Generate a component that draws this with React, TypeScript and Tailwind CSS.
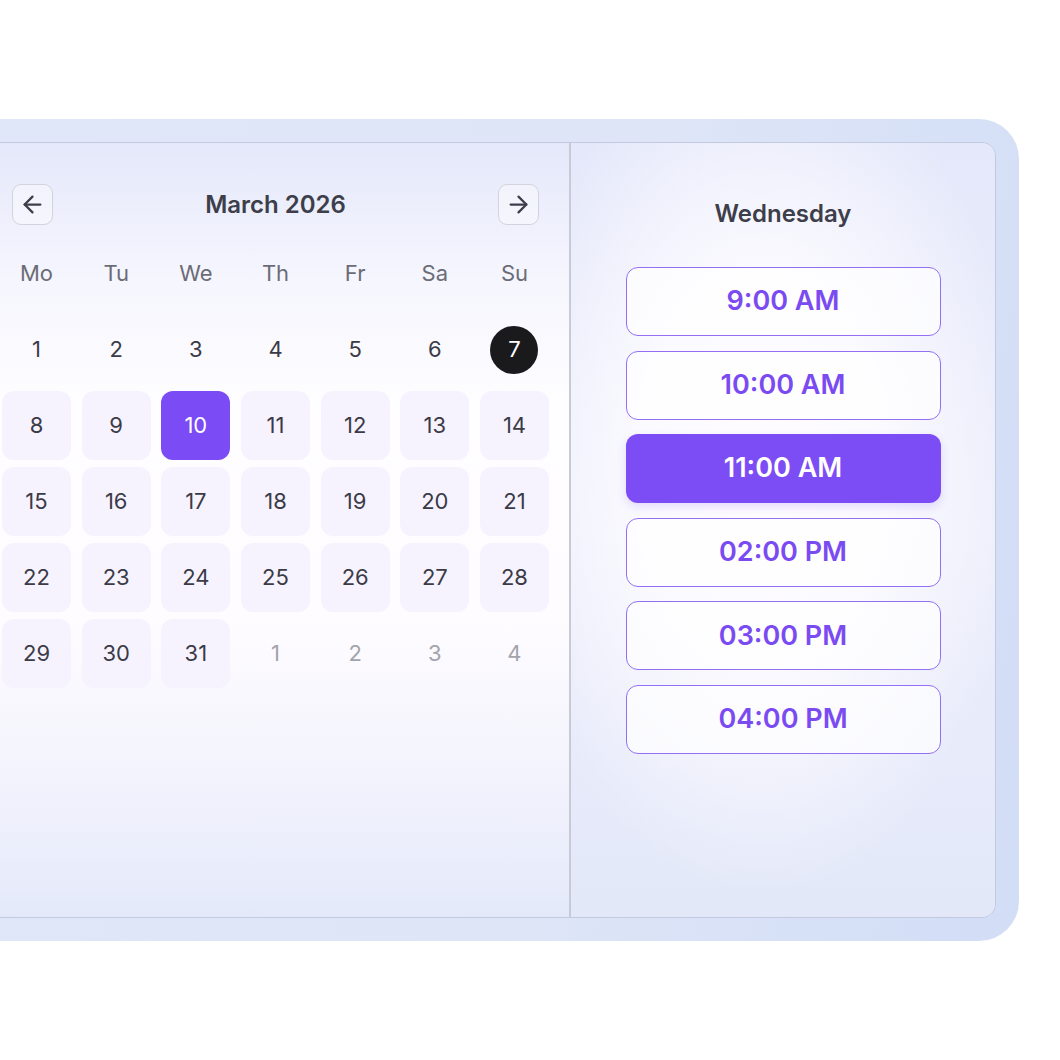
import { ArrowLeft, ArrowRight } from "lucide-react"

type Day = {
  n: number
  muted?: boolean
  filled?: boolean
  selected?: boolean
  today?: boolean
}

const WEEKDAYS = ["Mo", "Tu", "We", "Th", "Fr", "Sa", "Su"]

const DAYS: Day[] = [
  { n: 1 }, { n: 2 }, { n: 3 }, { n: 4 }, { n: 5 }, { n: 6 }, { n: 7, today: true },
  ...[8, 9, 10, 11, 12, 13, 14, 15, 16, 17, 18, 19, 20, 21, 22, 23, 24, 25, 26, 27, 28, 29, 30, 31].map(n => ({
    n,
    filled: true,
    selected: n === 10,
  })),
  { n: 1, muted: true }, { n: 2, muted: true }, { n: 3, muted: true }, { n: 4, muted: true },
]

const SLOTS = ["9:00 AM", "10:00 AM", "11:00 AM", "02:00 PM", "03:00 PM", "04:00 PM"]
const ACTIVE_SLOT = "11:00 AM"

const NavButton = ({ dir }: { dir: "prev" | "next" }) => (
  <button className="flex h-[41px] w-[41px] items-center justify-center rounded-[9px] border-[1.5px] border-[#d2d3db] bg-white/40 text-[#3d3e4a]">
    {dir === "prev" ? <ArrowLeft size={27} strokeWidth={2} /> : <ArrowRight size={27} strokeWidth={2} />}
  </button>
)

const DayCell = ({ day }: { day: Day }) => {
  if (day.today) {
    return (
      <div className="flex h-[69px] items-center justify-center">
        <span className="flex h-[48px] w-[48px] items-center justify-center rounded-full bg-[#1a1a1d] text-white">{day.n}</span>
      </div>
    )
  }
  if (day.selected) {
    return <div className="flex h-[69px] items-center justify-center rounded-[12px] bg-[#7b4bf5] text-white">{day.n}</div>
  }
  if (day.filled) {
    return <div className="flex h-[69px] items-center justify-center rounded-[12px] bg-[#f6f3ff] text-[#3b3b47]">{day.n}</div>
  }
  return (
    <div className={`flex h-[69px] items-center justify-center ${day.muted ? "text-[#a3a3ab]" : "text-[#3b3b47]"}`}>
      {day.n}
    </div>
  )
}

const Calendar = () => (
  <div className="flex h-full w-[588px] shrink-0 flex-col border-r-2 border-[#c8cad6] bg-[linear-gradient(180deg,#e4e8fa_0%,#f6f6fe_18%,#fefdff_34%,#fefcff_62%,#f4f4fd_80%,#e4e9fa_100%)] pl-[19px] pr-[20px] pt-[41px]">
    <div className="flex h-[41px] items-center justify-between px-[10px]">
      <NavButton dir="prev" />
      <h2 className="text-[24px] font-semibold text-[#3d3e4a]">March 2026</h2>
      <NavButton dir="next" />
    </div>

    <div className="mt-[14px] grid grid-cols-7 gap-x-[10.6px] gap-y-[7px] text-[22px]">
      {WEEKDAYS.map(w => (
        <div key={w} className="flex h-[69px] items-center justify-center text-[#6b6c76]">{w}</div>
      ))}
      {DAYS.map((d, i) => <DayCell key={i} day={d} />)}
    </div>
  </div>
)

const TimeSlots = () => (
  <div className="flex h-full flex-1 flex-col items-center bg-[radial-gradient(ellipse_62%_55%_at_45%_42%,#fefcff_0%,#fbfaff_45%,rgba(251,250,255,0)_100%),linear-gradient(180deg,#e4e8fa_0%,#eceefb_50%,#e3e8f9_100%)] pt-[57px]">
    <h3 className="text-[24px] font-semibold leading-[28px] text-[#3d3e4a]">Wednesday</h3>
    <div className="mt-[39px] flex flex-col gap-[14.6px]">
      {SLOTS.map(s =>
        s === ACTIVE_SLOT ? (
          <button key={s} className="flex h-[69px] w-[315px] items-center justify-center rounded-[12px] bg-[#7c4cf5] text-[27px] font-semibold text-white shadow-[0_4px_10px_rgba(124,76,245,0.18)]">
            {s}
          </button>
        ) : (
          <button key={s} className="flex h-[69px] w-[315px] items-center justify-center rounded-[12px] border-[1.5px] border-[#936ff6] bg-white/70 text-[27px] font-semibold text-[#7b4bf2]">
            {s}
          </button>
        )
      )}
    </div>
  </div>
)

export default function App() {
  return (
    <div className="h-[1060px] w-[1060px] overflow-hidden bg-white pt-[119px] font-['Inter',sans-serif]">
      <div className="ml-[-41px] h-[822px] w-[1060px] rounded-[40px] bg-[linear-gradient(100deg,#dfe7f8_0%,#dde5f7_60%,#d2ddf6_100%)] p-[23px]">
        <div className="flex h-full overflow-hidden rounded-[14px] border border-[#c3c9df]">
          <Calendar />
          <TimeSlots />
        </div>
      </div>
    </div>
  )
}
